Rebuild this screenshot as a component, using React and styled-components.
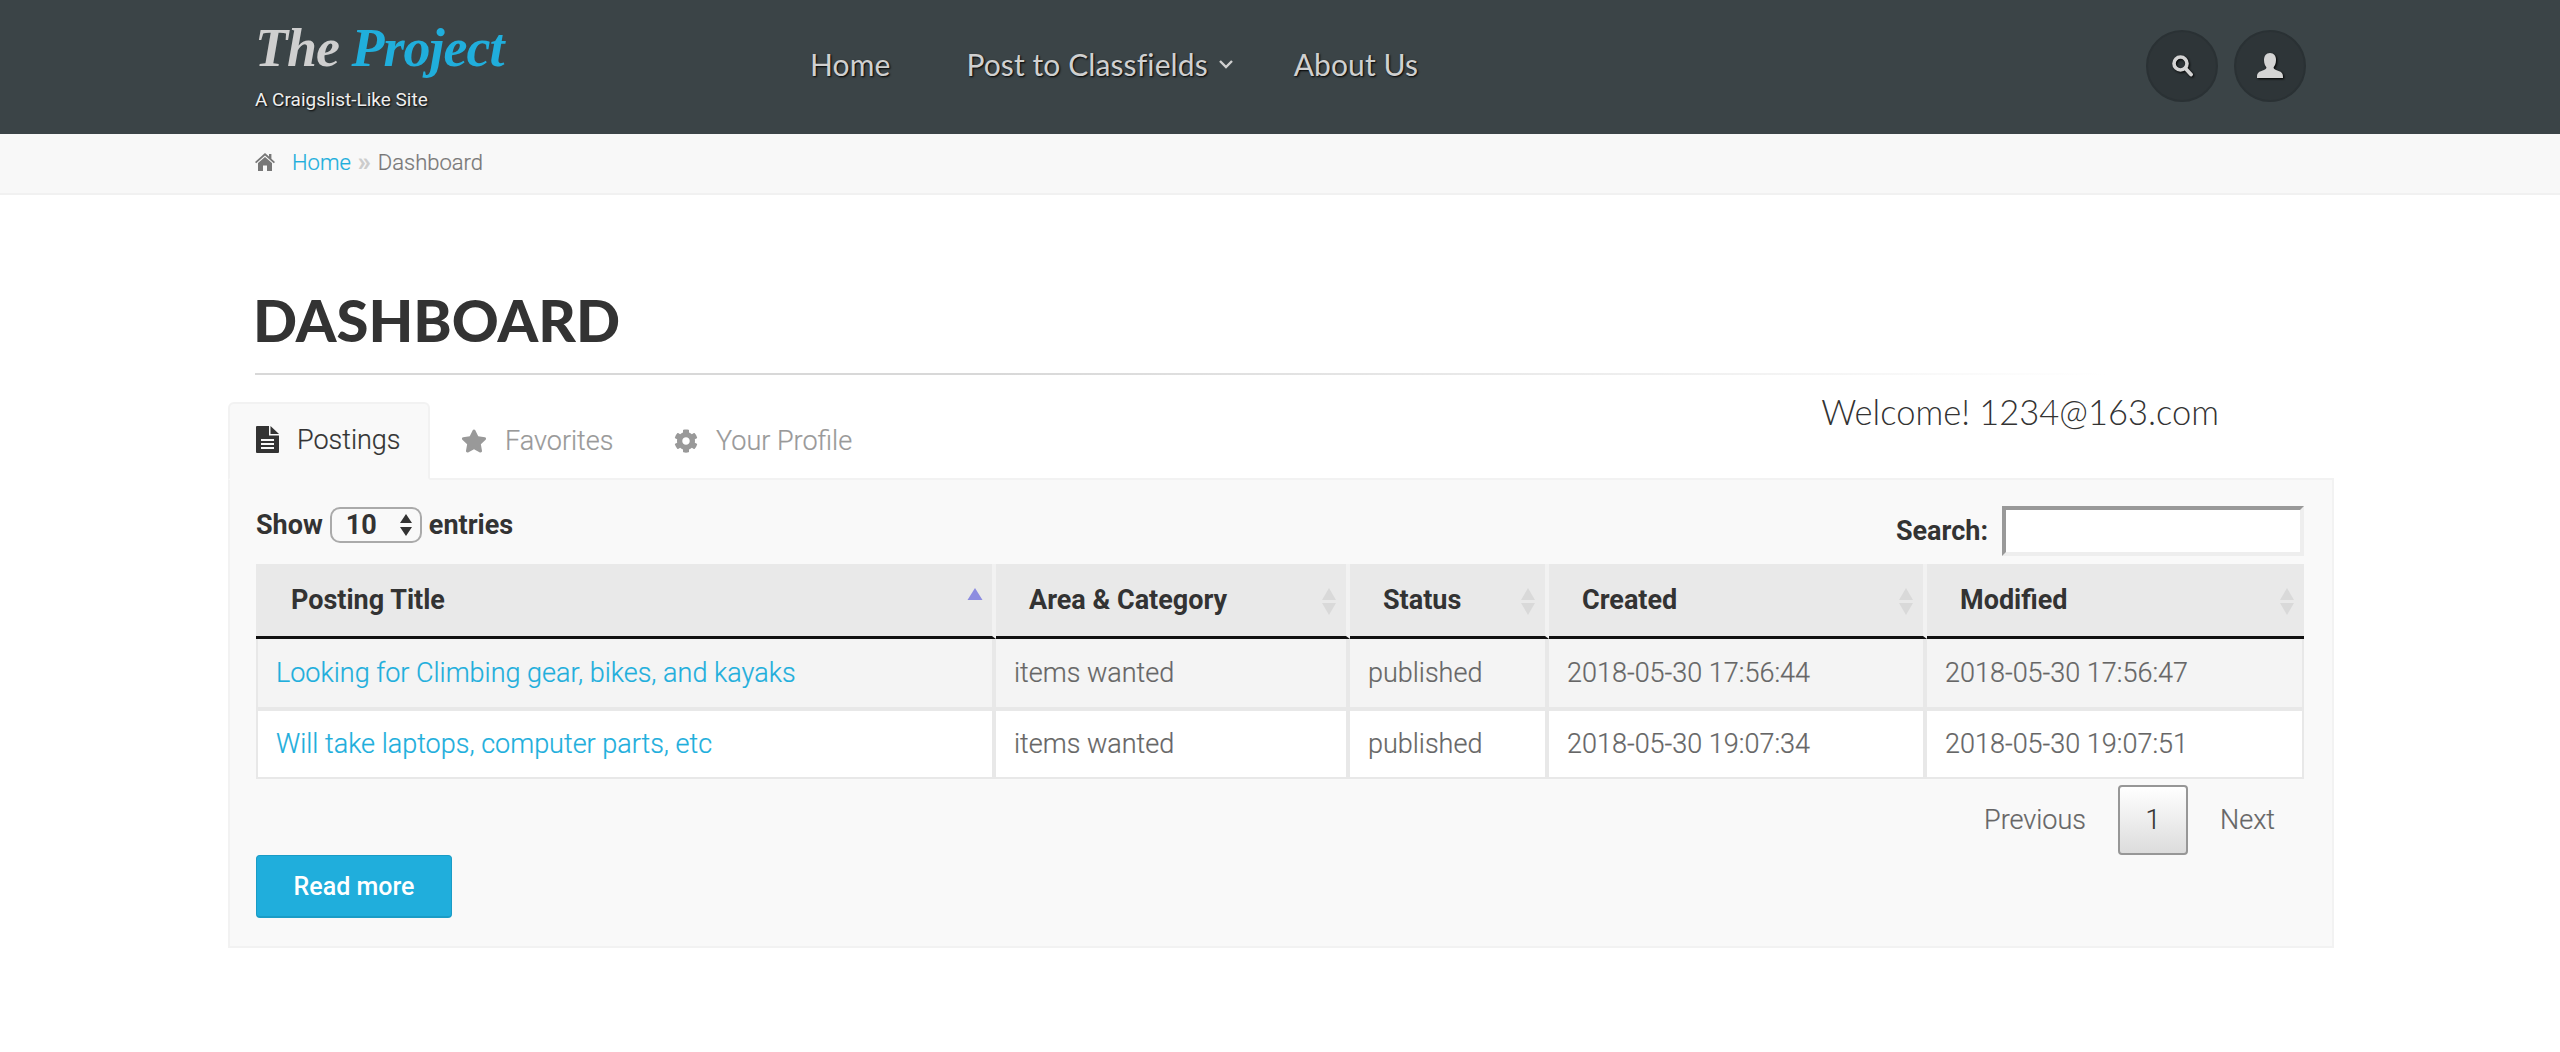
import React from "react";
import styled, { createGlobalStyle } from "styled-components";
import { FaStar, FaCog } from "react-icons/fa";

const GlobalStyle = createGlobalStyle`
  html, body { margin: 0; padding: 0; background: #fff; }
  body { font-family: "Roboto", "Liberation Sans", sans-serif; font-weight: 300; color: #777; }
`;

const blue = "#20aedc";

const TopBar = styled.header`
  height: 134px;
  background: #3b4447;
  display: flex;
  align-items: stretch;
  padding: 0 254px 0 255px;
`;

const Brand = styled.div`
  width: 555px;
  display: flex;
  flex-direction: column;
  padding-top: 16px;
`;

const Logo = styled.div`
  font-family: "Liberation Serif", "DejaVu Serif", cursive;
  font-style: italic;
  font-weight: 700;
  font-size: 54px;
  line-height: 64px;
  letter-spacing: -1px;
  color: #cfcfcf;
  white-space: nowrap;
`;

const LogoAccent = styled.span`
  color: ${blue};
`;

const Tagline = styled.div`
  font-size: 19px;
  line-height: 22px;
  margin-top: 9px;
  color: #eee;
  font-weight: 400;
  text-shadow: 1px 1px 2px #000;
`;

const Nav = styled.nav`
  display: flex;
  align-items: center;
  gap: 76px;
  flex: 1;
  padding-bottom: 6px;
`;

const NavItem = styled.a`
  display: flex;
  align-items: center;
  gap: 10px;
  font-family: "Lato", "Open Sans", sans-serif;
  font-size: 30px;
  font-weight: 400;
  letter-spacing: 0.1px;
  color: #d0d0d0;
  text-shadow: 1px 1px 2px #000;
  white-space: nowrap;
`;

const NavChevron = styled.svg`
  width: 16px;
  height: 10px;
  margin-right: -16px;
`;

const RoundGroup = styled.div`
  display: flex;
  align-items: center;
  gap: 16px;
  padding-bottom: 2px;
`;

const RoundButton = styled.button`
  width: 72px;
  height: 72px;
  padding: 0;
  border: 2px solid #2a3134;
  border-radius: 50%;
  background: #2e3538;
  display: flex;
  align-items: center;
  justify-content: center;
  svg { filter: drop-shadow(1px 1px 1px #000); }
`;

const Crumbs = styled.div`
  box-sizing: border-box;
  height: 61px;
  background: #f8f8f8;
  border-bottom: 2px solid #f1f1f1;
  padding: 0 0 3px 255px;
  display: flex;
  align-items: center;
  font-size: 22px;
  color: #777;
  -webkit-text-stroke: 0.2px;
`;

const CrumbLink = styled.a`
  color: ${blue};
  margin-left: 17px;
`;

const CrumbSep = styled.span`
  color: #ccc;
  font-weight: 700;
  font-size: 26px;
  line-height: 22px;
  margin: 0 7px;
`;

const Shell = styled.main`
  margin: 0 226px 0 228px;
  padding-bottom: 103px;
`;

const Title = styled.h1`
  margin: 0 0 0 25px;
  padding-top: 90px;
  height: 88px;
  font-family: "Lato", "Open Sans", sans-serif;
  font-size: 58px;
  line-height: 70px;
  font-weight: 900;
  color: #333;
  box-sizing: content-box;
`;

const Rule = styled.div`
  height: 2px;
  margin-left: 27px;
  margin-right: 226px;
  background: linear-gradient(to right, #d8d8d8 0%, #d8d8d8 40%, #fff 100%);
`;

const TabRow = styled.div`
  margin-top: 27px;
  height: 78px;
  display: flex;
  align-items: flex-end;
  position: relative;
  z-index: 1;
  margin-bottom: -2px;
`;

const Tab = styled.a`
  box-sizing: border-box;
  height: ${(p) => (p.$active ? "78px" : "76px")};
  width: ${(p) => p.$w}px;
  padding: 0 0 3px ${(p) => p.$pad}px;
  display: flex;
  align-items: center;
  gap: 18px;
  font-size: 27px;
  color: ${(p) => (p.$active ? "#333" : "#999")};
  background: ${(p) => (p.$active ? "#f9f9f9" : "transparent")};
  border: ${(p) => (p.$active ? "2px solid #f2f2f2" : "none")};
  border-bottom: ${(p) => (p.$active ? "2px solid #f9f9f9" : "none")};
  border-radius: 6px 6px 0 0;
  white-space: nowrap;
  -webkit-text-stroke: 0.2px;
  svg { flex: none; }
`;

const Welcome = styled.div`
  align-self: flex-start;
  margin-left: auto;
  margin-right: 115px;
  margin-top: -12px;
  font-family: "Lato", "Open Sans", sans-serif;
  font-size: 34.5px;
  line-height: 44px;
  font-weight: 300;
  color: #333;
`;

const Panel = styled.section`
  background: #f9f9f9;
  border: 2px solid #f2f2f2;
  padding: 26px 28px 28px 26px;
`;

const FilterRow = styled.div`
  display: flex;
  justify-content: space-between;
  align-items: center;
  height: 50px;
  margin-bottom: 8px;
  font-size: 27px;
  font-weight: 700;
  color: #333;
`;

const LengthControl = styled.label`
  display: flex;
  align-items: center;
  gap: 7px;
  margin-top: -12px;
`;

const FakeSelect = styled.span`
  box-sizing: border-box;
  width: 92px;
  height: 36px;
  border: 2px solid #aaa;
  border-radius: 10px;
  display: flex;
  align-items: center;
  justify-content: space-between;
  padding: 0 6px 0 14px;
`;

const SearchControl = styled.label`
  display: flex;
  align-items: center;
  gap: 14px;
`;

const SearchInput = styled.input`
  box-sizing: border-box;
  width: 302px;
  height: 50px;
  background: #fff;
  border-style: solid;
  border-width: 4px;
  border-color: #999 #eee #eee #999;
  padding: 0 4px;
`;

const Table = styled.table`
  width: 2048px;
  table-layout: fixed;
  border-collapse: separate;
  border-spacing: 0;
  font-size: 27px;
`;

const HeadCell = styled.th`
  position: relative;
  box-sizing: border-box;
  height: 75px;
  padding: 0 0 1px 33px;
  text-align: left;
  background: #e9e9e9;
  border-right: 4px solid #f2f2f2;
  border-bottom: 3px solid #111;
  font-weight: 700;
  color: #333;
  &:first-child { padding-left: 35px; }
  &:last-child { border-right: none; }
`;

const SortMark = styled.svg`
  position: absolute;
  right: 8px;
  top: 24px;
  width: 18px;
  height: 28px;
`;

const Row = styled.tr`
  background: ${(p) => (p.$odd ? "#f4f4f4" : "#fff")};
`;

const Cell = styled.td`
  box-sizing: border-box;
  height: ${(p) => (p.$last ? "68px" : "72px")};
  padding: 0 0 0 18px;
  border-right: 4px solid #e8e8e8;
  border-bottom: ${(p) => (p.$last ? "2px" : "4px")} solid #e8e8e8;
  color: #666;
  white-space: nowrap;
  -webkit-text-stroke: 0.2px;
  &:first-child { border-left: 2px solid #e8e8e8; }
  &:last-child { border-right: 2px solid #e8e8e8; }
`;

const CellLink = styled.a`
  color: ${blue};
`;

const Pager = styled.div`
  display: flex;
  justify-content: flex-end;
  align-items: center;
  height: 70px;
  margin-top: 6px;
  font-size: 27px;
  color: #666;
  -webkit-text-stroke: 0.2px;
`;

const PageText = styled.a`
  padding: 0 ${(p) => (p.$next ? "29px" : "32px")} 0 32px;
`;

const PageCurrent = styled.a`
  box-sizing: border-box;
  width: 70px;
  height: 70px;
  border: 2px solid #979797;
  border-radius: 4px;
  background: linear-gradient(to bottom, #fff 0%, #dcdcdc 100%);
  color: #333;
  display: flex;
  align-items: center;
  justify-content: center;
`;

const ReadMore = styled.button`
  display: block;
  box-sizing: border-box;
  width: 196px;
  height: 63px;
  border: 1px solid #1a9cc6;
  border-bottom-width: 2px;
  border-radius: 4px;
  background: ${blue};
  color: #fff;
  font-family: "Roboto", sans-serif;
  font-size: 25px;
  font-weight: 500;
`;

const HomeIcon = () => (
  <svg width="20" height="18" viewBox="0 0 20 18" fill="#777">
    <path d="M10 0 L14 3.6 V1 H16.4 V5.8 L20 9 L18.8 10.2 L10 2.6 L1.2 10.2 L0 9 Z" />
    <path d="M10 4 L17 10 V18 H12 V12.5 H8 V18 H3 V10 Z" />
  </svg>
);

const FileIcon = () => (
  <svg width="23" height="27" viewBox="0 0 23 27" fill="#333">
    <path d="M14.5 0 L23 8 H14.5 Z" />
    <path
      fillRule="evenodd"
      d="M1 0 H13 V9.5 H23 V26 Q23 27 22 27 H1 Q0 27 0 26 V1 Q0 0 1 0 Z M5 13 V15 H18 V13 Z M5 17 V19 H18 V17 Z M5 21 V23 H18 V21 Z"
    />
  </svg>
);

const SearchIcon = () => (
  <svg width="22" height="24" viewBox="0 0 22 24" fill="none" stroke="#d4d4d4">
    <circle cx="9.5" cy="9.5" r="6.5" strokeWidth="3.6" />
    <path d="M14.5 14.5 L20 20.5" strokeWidth="3.8" strokeLinecap="round" />
  </svg>
);

const UserIcon = () => (
  <svg width="26" height="26" viewBox="0 0 26 26" fill="#d4d4d4">
    <path d="M13 0 C17 0 19 3 19 7 C19 10.5 17.8 12.8 16.6 14.2 C16.6 16 18 16.8 21 17.8 C24 18.8 26 19.8 26 24 V25 H0 V24 C0 19.8 2 18.8 5 17.8 C8 16.8 9.4 16 9.4 14.2 C8.2 12.8 7 10.5 7 7 C7 3 9 0 13 0 Z" />
  </svg>
);

const SortArrows = ({ active }) =>
  active ? (
    <SortMark viewBox="0 0 18 28">
      <path d="M9 0 L16.5 12 H1.5 Z" fill="#8c8ce0" />
    </SortMark>
  ) : (
    <SortMark viewBox="0 0 18 28">
      <path d="M9 0 L16 12 H2 Z M2 15 H16 L9 27 Z" fill="#d9d9d9" />
    </SortMark>
  );

const columns = [
  { label: "Posting Title", width: 740, active: true },
  { label: "Area & Category", width: 354 },
  { label: "Status", width: 199 },
  { label: "Created", width: 378 },
  { label: "Modified", width: 377 },
];

const postings = [
  { title: "Looking for Climbing gear, bikes, and kayaks", area: "items wanted", status: "published", created: "2018-05-30 17:56:44", modified: "2018-05-30 17:56:47" },
  { title: "Will take laptops, computer parts, etc", area: "items wanted", status: "published", created: "2018-05-30 19:07:34", modified: "2018-05-30 19:07:51" },
];

export default function App() {
  return (
    <>
      <GlobalStyle />
      <TopBar>
        <Brand>
          <Logo>The <LogoAccent>Project</LogoAccent></Logo>
          <Tagline>A Craigslist-Like Site</Tagline>
        </Brand>
        <Nav>
          <NavItem>Home</NavItem>
          <NavItem>
            Post to Classfields
            <NavChevron viewBox="0 0 16 10" fill="none" stroke="#d0d0d0" strokeWidth="2.4">
              <path d="M2 2 L8 8 L14 2" />
            </NavChevron>
          </NavItem>
          <NavItem>About Us</NavItem>
        </Nav>
        <RoundGroup>
          <RoundButton><SearchIcon /></RoundButton>
          <RoundButton><UserIcon /></RoundButton>
        </RoundGroup>
      </TopBar>

      <Crumbs>
        <HomeIcon />
        <CrumbLink>Home</CrumbLink>
        <CrumbSep>»</CrumbSep>
        Dashboard
      </Crumbs>

      <Shell>
        <Title>DASHBOARD</Title>
        <Rule />
        <TabRow>
          <Tab $active $w={202} $pad={26}><FileIcon />Postings</Tab>
          <Tab $w={244} $pad={31}><FaStar size={26} color="#999" />Favorites</Tab>
          <Tab $w={200} $pad={0}><FaCog size={24} color="#999" />Your Profile</Tab>
          <Welcome>Welcome! 1234@163.com</Welcome>
        </TabRow>
        <Panel>
          <FilterRow>
            <LengthControl>
              Show
              <FakeSelect>
                10
                <svg width="16" height="24" viewBox="0 0 16 24" fill="#333">
                  <path d="M8 1 L14 10 H2 Z M2 14 H14 L8 23 Z" />
                </svg>
              </FakeSelect>
              entries
            </LengthControl>
            <SearchControl>
              Search:
              <SearchInput type="text" />
            </SearchControl>
          </FilterRow>
          <Table>
            <colgroup>
              {columns.map((c) => <col key={c.label} width={c.width} />)}
            </colgroup>
            <thead>
              <tr>
                {columns.map((c) => (
                  <HeadCell key={c.label}>
                    {c.label}
                    <SortArrows active={c.active} />
                  </HeadCell>
                ))}
              </tr>
            </thead>
            <tbody>
              {postings.map((p, i) => {
                const last = i === postings.length - 1;
                return (
                  <Row key={p.title} $odd={i % 2 === 0}>
                    <Cell $last={last}><CellLink>{p.title}</CellLink></Cell>
                    <Cell $last={last}>{p.area}</Cell>
                    <Cell $last={last}>{p.status}</Cell>
                    <Cell $last={last}>{p.created}</Cell>
                    <Cell $last={last}>{p.modified}</Cell>
                  </Row>
                );
              })}
            </tbody>
          </Table>
          <Pager>
            <PageText>Previous</PageText>
            <PageCurrent>1</PageCurrent>
            <PageText $next>Next</PageText>
          </Pager>
          <ReadMore>Read more</ReadMore>
        </Panel>
      </Shell>
    </>
  );
}
